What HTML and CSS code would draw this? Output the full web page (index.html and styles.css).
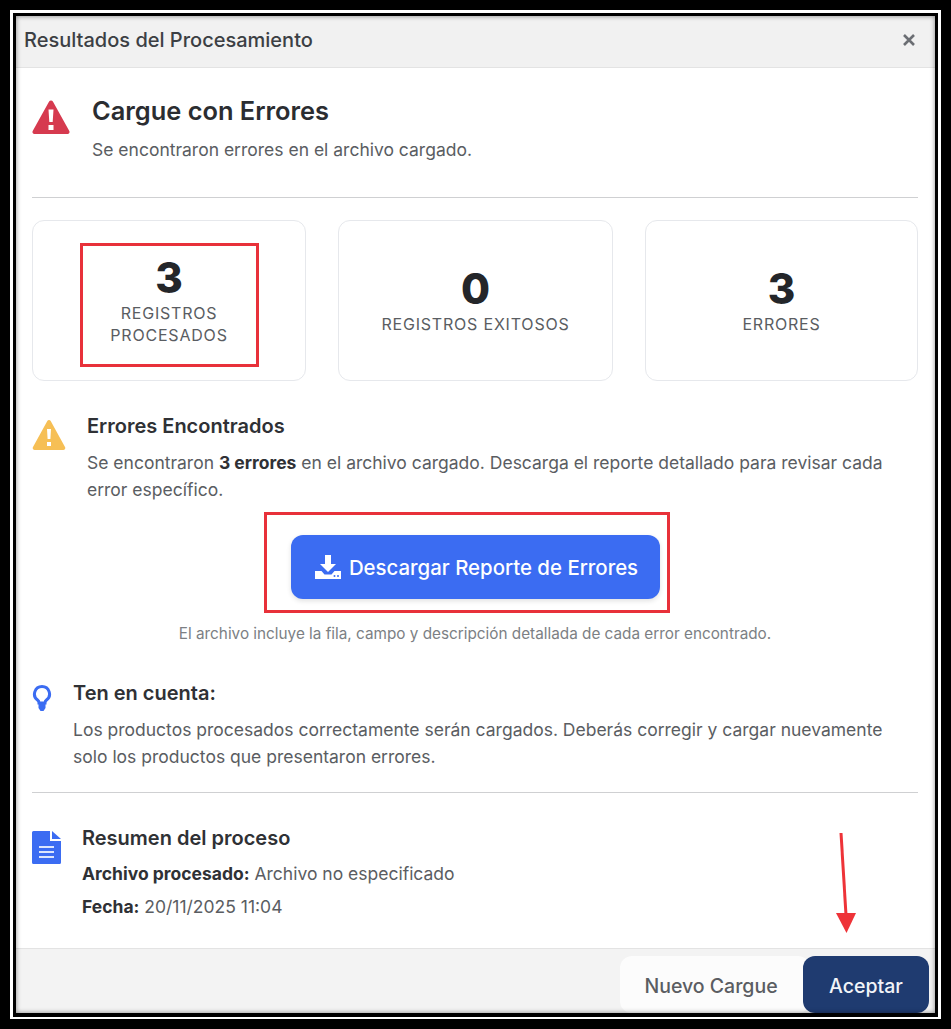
FILE: index.html
```html
<!DOCTYPE html>
<html lang="es">
<head>
    <meta charset="UTF-8">
    <meta name="viewport" content="width=device-width, initial-scale=1.0">
    <title>Resultados del Procesamiento</title>
    <link rel="stylesheet" href="styles.css">
</head>
<body>
<div class="frame">
<div class="modal">
    <div class="modal-header">
        <span class="modal-title">Resultados del Procesamiento</span>
        <svg class="close-icon" viewBox="0 0 14 14"><path d="M2 2l10 10M12 2L2 12" stroke="#6b6e73" stroke-width="2.600" fill="none"/></svg>
    </div>

    <div class="modal-body">
        <div class="hero">
            <svg class="hero-icon" viewBox="0 0 38 36"><path d="M19 1.500a2.200 2.200 0 0 1 1.900 1.100l16.400 29.300a2 2 0 0 1-1.800 3H2.500a2 2 0 0 1-1.800-3L17.100 2.600A2.200 2.200 0 0 1 19 1.500z" fill="#d63a4f"/><path d="M16.500 10.500h5l-.8 12.500h-3.400z M16.500 26h5v5h-5z" fill="#fff"/></svg>
            <div>
                <h1 class="hero-title">Cargue con Errores</h1>
                <p class="hero-sub">Se encontraron errores en el archivo cargado.</p>
            </div>
        </div>
        <hr class="divider">

        <div class="stats">
            <div class="stat">
                <div class="stat-mark">
                    <div class="stat-num">3</div>
                    <div class="stat-label">REGISTROS<br>PROCESADOS</div>
                </div>
            </div>
            <div class="stat">
                <div class="stat-num">0</div>
                <div class="stat-label">REGISTROS EXITOSOS</div>
            </div>
            <div class="stat">
                <div class="stat-num">3</div>
                <div class="stat-label">ERRORES</div>
            </div>
        </div>

        <div class="errors">
            <svg class="errors-icon" viewBox="0 0 34 32"><path d="M17 1a2 2 0 0 1 1.700 1L33 28a2 2 0 0 1-1.700 3H2.700A2 2 0 0 1 1 28L15.300 2A2 2 0 0 1 17 1z" fill="#f6bf55"/><path d="M15 10h4l-.6 10h-2.800z M15 23h4v4h-4z" fill="#fff"/></svg>
            <div class="errors-text">
                <h2 class="section-title">Errores Encontrados</h2>
                <p class="para">Se encontraron <b>3 errores</b> en el archivo cargado. Descarga el reporte detallado para revisar cada error específico.</p>
            </div>
        </div>

        <div class="download">
            <div class="download-mark">
                <button class="btn-download">
                    <svg class="download-icon" viewBox="0 0 26 24"><path d="M10 0h6v9h5l-8 8-8-8h5z" fill="#fff"/><path d="M0 16h6.500l3 3.500h7l3-3.500H26v8H0z" fill="#fff"/><circle cx="19.500" cy="21" r="1" fill="#3b6cf2"/><circle cx="23" cy="21" r="1" fill="#3b6cf2"/></svg>
                    Descargar Reporte de Errores
                </button>
            </div>
            <p class="download-note">El archivo incluye la fila, campo y descripción detallada de cada error encontrado.</p>
        </div>

        <div class="tip">
            <svg class="tip-icon" viewBox="0 0 20 28"><path d="M10 2.500a7.500 7.500 0 0 1 4.500 13.500c-1 .8-1.500 1.600-1.500 3H7c0-1.400-.5-2.200-1.500-3A7.500 7.500 0 0 1 10 2.500z" fill="none" stroke="#3b6cf2" stroke-width="3"/><path d="M6.500 19.500h7V24l-2 3h-3l-2-3z" fill="#3b6cf2"/></svg>
            <div class="tip-text">
                <h2 class="section-title">Ten en cuenta:</h2>
                <p class="para">Los productos procesados correctamente serán cargados. Deberás corregir y cargar nuevamente solo los productos que presentaron errores.</p>
            </div>
        </div>
        <hr class="divider divider-low">

        <div class="summary">
            <svg class="doc-icon" viewBox="0 0 29 33"><path d="M1.500 0H18v10h11v21.500a1.500 1.500 0 0 1-1.500 1.500h-26A1.500 1.500 0 0 1 0 31.500v-30A1.500 1.500 0 0 1 1.500 0z" fill="#3b6cf2"/><path d="M20 0l9 8h-9z" fill="#3b6cf2"/><path d="M7 15h15v2H7zM7 20h15v2H7zM7 25h15v2H7z" fill="#dbe5fd"/></svg>
            <div>
                <h2 class="section-title">Resumen del proceso</h2>
                <p class="summary-line"><b>Archivo procesado:</b> Archivo no especificado</p>
                <p class="summary-line"><b>Fecha:</b> 20/11/2025 11:04</p>
            </div>
        </div>
    </div>

    <div class="modal-footer">
        <button class="btn btn-light">Nuevo Cargue</button>
        <button class="btn btn-dark">Aceptar</button>
    </div>

    <svg class="arrow" viewBox="0 0 32 102"><path d="M12 0l5 82" stroke="#ee3338" stroke-width="3" fill="none"/><path d="M7 80h20l-9.500 20z" fill="#ee3338"/></svg>
</div>
</div>
</body>
</html>
```

FILE: styles.css
```css
*{
    box-sizing: border-box;
}
html,body{
    height: 100%;
}
body{
    margin: 0;
    padding: 10px;
    background-color: #000;
    font-family: 'Inter', 'Noto Sans', sans-serif;
    color: #5a5d62;
}
.frame{
    height: 100%;
    border: 3px solid #fff;
    border-bottom-width: 2px;
    background-color: #000;
    padding: 3px 3px 4px 3px;
}
.modal{
    position: relative;
    height: 100%;
    background-color: #fff;
    display: flex;
    flex-direction: column;
}
/* soft grey edge the screenshot has round the dialog */
.modal::after{
    content: "";
    position: absolute;
    inset: 0;
    box-shadow: inset 0 0 5px rgba(0,0,0,.45);
    pointer-events: none;
}
.modal-header{
    height: 52px;
    flex: none;
    display: flex;
    align-items: center;
    justify-content: space-between;
    padding: 0 19px 3px 8px;
    background-color: #f1f1f1;
    border-bottom: 1px solid #e3e3e3;
}
.modal-title{
    font-size: 20px;
    font-weight: 500;
    color: #3c3f44;
}
.close-icon{
    width: 14px;
    height: 14px;
}
.modal-body{
    flex: 1;
    padding: 0 17px 0 16px;
}
.hero{
    display: flex;
    gap: 22px;
    padding-top: 26px;
}
.hero-icon{
    width: 38px;
    height: 36px;
    margin-top: 5px;
    flex: none;
}
.hero-title{
    margin: 0;
    height: 34px;
    line-height: 34px;
    font-size: 25.400px;
    font-weight: 600;
    color: #2b2d31;
}
.hero-sub{
    margin: 9px 0 0;
    line-height: 26px;
    font-size: 17.500px;
}
.divider{
    margin: 0;
    border: 0;
    border-top: 1px solid #cfd0d2;
}
.hero + .divider{
    margin-top: 34px;
}
.stats{
    display: grid;
    grid-template-columns: 274px 275px 273px;
    column-gap: 32px;
    margin-top: 22px;
}
.stat{
    height: 161px;
    border: 1px solid #e6e8ec;
    border-radius: 12px;
    padding-bottom: 2px;
    display: flex;
    flex-direction: column;
    align-items: center;
    justify-content: center;
    text-align: center;
}
.stat-mark{
    width: 179px;
    height: 124px;
    margin-top: 10px;
    border: 3px solid #e8313a;
    display: flex;
    flex-direction: column;
    align-items: center;
    justify-content: center;
    padding-bottom: 9px;
}
.stat-num{
    font-size: 42px;
    font-weight: 800;
    line-height: 48px;
    color: #24262a;
}
.stat-label{
    font-size: 16px;
    line-height: 22px;
    letter-spacing: .8px;
    color: #5a5d62;
}
.errors{
    display: flex;
    gap: 21px;
    margin-top: 32px;
}
.errors-icon{
    width: 34px;
    height: 32px;
    margin-top: 6px;
    flex: none;
}
.section-title{
    margin: 0;
    font-size: 20px;
    line-height: 26px;
    font-weight: 600;
    color: #2f3135;
}
.para{
    margin: 10px 0 0;
    font-size: 17.500px;
    line-height: 27px;
}
.para b{
    color: #2f3135;
}
.download{
    margin-top: 9px;
    display: flex;
    flex-direction: column;
    align-items: center;
}
.download-mark{
    width: 406px;
    height: 101px;
    border: 3px solid #e8313a;
    margin-right: 16px;
    display: flex;
    align-items: center;
    justify-content: center;
    padding: 9px 0 0 16px;
}
.btn-download{
    width: 369px;
    height: 64px;
    flex: none;
    border: 0;
    border-radius: 12px;
    padding: 0 0 0 3px;
    background-color: #3b6cf2;
    color: #fff;
    font-family: inherit;
    font-size: 20.400px;
    font-weight: 500;
    display: flex;
    align-items: center;
    justify-content: center;
    gap: 8px;
    box-shadow: 0 2px 5px rgba(0,0,0,.12);
}
.download-icon{
    width: 26px;
    height: 24px;
}
.download-note{
    margin: 11px 0 0;
    font-size: 15.300px;
    line-height: 20px;
    color: #7c7f84;
}
.tip{
    display: flex;
    gap: 21px;
    margin-top: 36px;
}
.tip-icon{
    width: 20px;
    height: 28px;
    margin-top: 4px;
    flex: none;
}
.divider-low{
    margin-top: 22px;
}
.summary{
    display: flex;
    gap: 21px;
    margin-top: 32px;
}
.doc-icon{
    width: 29px;
    height: 33px;
    margin-top: 6px;
    flex: none;
}
.summary-line{
    margin: 7px 0 0;
    font-size: 17.500px;
    line-height: 26px;
}
.section-title + .summary-line{
    margin-top: 10px;
}
.summary-line b{
    color: #2f3135;
}
.modal-footer{
    flex: none;
    height: 65px;
    display: flex;
    justify-content: flex-end;
    align-items: flex-end;
    padding-right: 6px;
    background-color: #f3f3f3;
    border-top: 1px solid #e3e3e3;
}
.btn{
    height: 57px;
    border: 0;
    border-radius: 12px;
    padding: 2px 0 0;
    font-family: inherit;
    font-size: 19.500px;
    font-weight: 500;
}
.btn-light{
    width: 190px;
    margin-right: -7px;
    padding-right: 8px;
    background-color: #fcfcfc;
    color: #5a5d62;
}
.btn-dark{
    position: relative;
    width: 126px;
    background-color: #1f3b70;
    color: #f2f4f8;
}
.arrow{
    position: absolute;
    left: 813px;
    top: 817px;
    width: 32px;
    height: 102px;
}
```
